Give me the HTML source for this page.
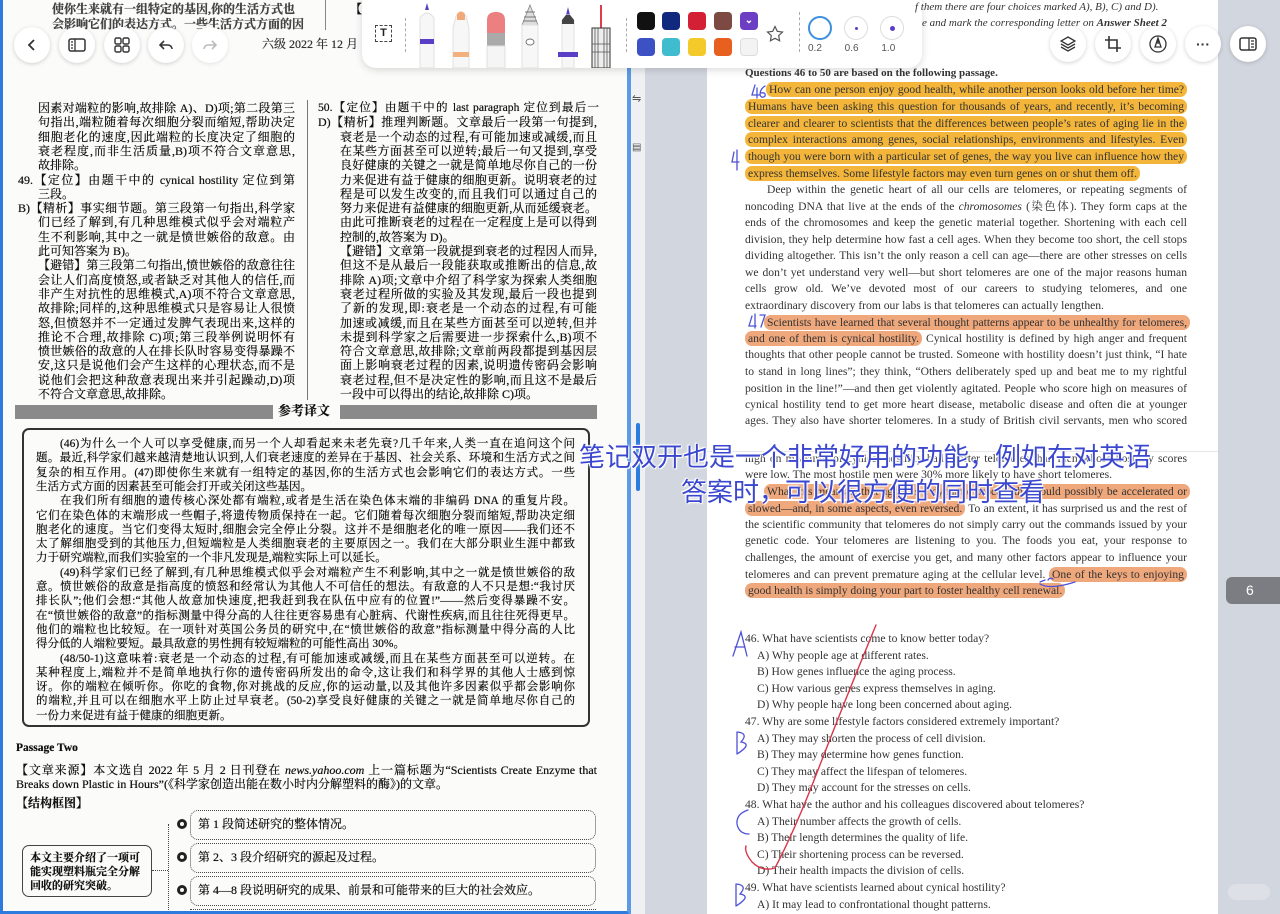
<!DOCTYPE html>
<html style="overflow:hidden;height:914px"><head><meta charset="utf-8">
<style>
*{margin:0;padding:0;box-sizing:border-box}
body{width:1280px;height:914px;overflow:hidden;background:#d2d6de;position:relative;font-family:"Liberation Serif","Noto Serif CJK SC",serif}
.abs{position:absolute}
#lp{position:absolute;left:0;top:0;width:629px;height:914px;background:#fbfbfa;border-left:3px solid #2e7be0;border-bottom:3px solid #2e7be0;border-right:2px solid #5b9ae6}
#mid{position:absolute;left:629px;top:0;width:16px;height:914px;background:#eef0f3}
#rp{position:absolute;left:707px;top:0;width:511px;height:914px;background:#fff}
.cn{position:absolute;font-size:12px;line-height:14.3px;height:14.3px;color:#111;text-shadow:0 0 .4px #111;text-align:justify;text-align-last:justify;overflow:hidden;font-family:"Liberation Serif","Noto Serif CJK SC",serif}
.nj{text-align-last:left}
.bx{font-size:11.5px}
.en{position:absolute;left:745px;width:442px;font-size:11.6px;line-height:16px;height:16px;color:#333;text-align:justify;text-align-last:justify;overflow:hidden;white-space:nowrap;word-spacing:0}
.en.nj{text-align-last:left}
.hy{background:#f4b63a;border-radius:7px;padding:1px 3px}
.ho{background:#efa77c;border-radius:7px;padding:1px 3px}
.q{position:absolute;font-size:11.6px;color:#333;white-space:nowrap}
.btn{position:absolute;width:36px;height:36px;border-radius:50%;background:#fff;box-shadow:0 1px 4px rgba(0,0,0,.18);display:flex;align-items:center;justify-content:center}
.ov{position:absolute;font-family:"Liberation Sans","Noto Sans CJK SC",sans-serif;font-size:26px;color:#3b47cf;white-space:nowrap;text-shadow:0 0 2px #fff,0 0 3px #fff,1px 1px 0 #fff,-1px -1px 0 #fff}
.sw{position:absolute;width:18px;height:18px;border-radius:4px}
</style></head><body>
<div id="lp"></div>
<div id="mid"></div>
<div class="abs" style="left:629px;top:0;width:2px;height:914px;background:#5b9ae6"></div>
<div id="rp"></div>

<div class="cn nj" style="left:52px;top:2px;width:260px;font-weight:bold;color:#444">使你生来就有一组特定的基因,你的生活方式也</div>
<div class="cn nj" style="left:52px;top:17px;width:260px;font-weight:bold;color:#444">会影响它们的表达方式。一些生活方式方面的因</div>
<div class="abs" style="left:325px;top:0;width:1px;height:30px;background:#888"></div>
<div class="cn nj" style="left:350px;top:2px;width:20px">【</div>

<div class="btn" style="left:14px;top:27px"><svg width="14" height="14" viewBox="0 0 14 14"><path d="M9 2L4 7l5 5" fill="none" stroke="#333" stroke-width="1.8"/></svg></div>
<div class="btn" style="left:59px;top:27px"><svg width="18" height="14" viewBox="0 0 18 14"><rect x="1" y="1" width="16" height="12" rx="2" fill="none" stroke="#333" stroke-width="1.5"/><path d="M7 1v12M3 4h2M3 7h2M3 10h2" stroke="#333" stroke-width="1.3"/></svg></div>
<div class="btn" style="left:104px;top:27px"><svg width="16" height="16" viewBox="0 0 16 16" fill="none" stroke="#333" stroke-width="1.4"><rect x="1" y="1" width="6" height="6" rx="1.5"/><rect x="9" y="1" width="6" height="6" rx="1.5"/><rect x="1" y="9" width="6" height="6" rx="1.5"/><rect x="9" y="9" width="6" height="6" rx="1.5"/></svg></div>
<div class="btn" style="left:148px;top:27px"><svg width="14" height="12" viewBox="0 0 14 12"><path d="M5 2L1 6l4 4M1 6h8a4 4 0 0 1 4 4" fill="none" stroke="#333" stroke-width="1.6"/></svg></div>
<div class="btn" style="left:192px;top:27px;box-shadow:0 1px 4px rgba(0,0,0,.1)"><svg width="14" height="12" viewBox="0 0 14 12"><path d="M9 2l4 4-4 4M13 6H5a4 4 0 0 0-4 4" fill="none" stroke="#bbb" stroke-width="1.6"/></svg></div>
<div class="cn nj" style="left:262px;top:37px;width:110px;color:#333">六级 2022 年 12 月</div>

<div class="abs" style="left:362px;top:-10px;width:560px;height:78px;background:#fff;border-radius:14px;box-shadow:0 2px 8px rgba(0,0,0,.15)"></div>
<div class="abs" style="left:375px;top:25px;width:17px;height:17px;border:1.5px dashed #444;font:bold 11px 'Liberation Sans',sans-serif;text-align:center;line-height:14px;color:#222">T</div>
<div class="abs" style="left:405px;top:18px;height:34px;border-left:1.5px dashed #aaa"></div>
<svg class="abs" style="left:410px;top:0" width="205" height="68" viewBox="0 0 205 68">
 <g><path d="M17 3l2 7h-4z" fill="#5a3fc0"/><path d="M10 18q7-10 14 0v50H10z" fill="#f7f7f7" stroke="#e0e0e0"/><rect x="10" y="39" width="14" height="5" fill="#5b3ec6"/></g>
 <g><path d="M46 16q5-6 10 0l3 12v40H43V28z" fill="#f7f7f7" stroke="#e0e0e0"/><path d="M47 14q4-5 8 0v6h-8z" fill="#f2a978"/><rect x="43" y="52" width="16" height="5" fill="#f3b07e"/></g>
 <g><path d="M77 20q0-8 9-8t9 8v13H77z" fill="#ec7f7f"/><rect x="77" y="33" width="18" height="13" fill="#aaa"/><rect x="77" y="46" width="18" height="22" fill="#f5f5f5" stroke="#e0e0e0"/></g>
 <g><path d="M120 5l8 20h-16z" fill="#ddd" stroke="#888" stroke-width=".8"/><path d="M115 12h10M114 17h12M113 21h14" stroke="#777"/><path d="M112 25h16v43h-16z" fill="#f7f7f7" stroke="#e0e0e0"/><ellipse cx="120" cy="42" rx="4" ry="3" fill="#fff" stroke="#777"/></g>
 <g><path d="M156 15l2-8h0l2 8z" fill="#5a3fc0"/><path d="M152 20l4-5h4l4 5v48h-12z" fill="#f7f7f7" stroke="#e0e0e0"/><path d="M152 20l4-5h4l4 5v4h-12z" fill="#444"/><rect x="148" y="52" width="20" height="5" fill="#5b3ec6"/></g>
 <g><rect x="190" y="5" width="2" height="25" fill="#e23b4a"/><rect x="182" y="28" width="18" height="40" fill="#eee" stroke="#333" stroke-width="1"/><path d="M185 28v40M188 28v40M194 28v40M197 28v40M182 44h18M182 52h18" stroke="#555" stroke-width=".8"/></g>
</svg>
<div class="abs" style="left:626px;top:18px;height:34px;border-left:1.5px dashed #aaa"></div>
<div class="sw" style="left:637px;top:12px;background:#111"></div>
<div class="sw" style="left:662px;top:12px;background:#10287e"></div>
<div class="sw" style="left:688px;top:12px;background:#d42034"></div>
<div class="sw" style="left:714px;top:12px;background:#7d4a43"></div>
<div class="sw" style="left:740px;top:12px;background:#6c3ec4;color:#fff;font:bold 10px sans-serif;text-align:center;line-height:18px">&#8964;</div>
<div class="sw" style="left:637px;top:38px;background:#3c52c4"></div>
<div class="sw" style="left:662px;top:38px;background:#3fbccd"></div>
<div class="sw" style="left:688px;top:38px;background:#f4ca2a"></div>
<div class="sw" style="left:714px;top:38px;background:#e8601f"></div>
<div class="sw" style="left:740px;top:38px;background:#f3f3f3;border:1px solid #ddd"></div>
<svg class="abs" style="left:766px;top:25px" width="18" height="18" viewBox="0 0 18 18"><path d="M9 1.5l2.3 4.8 5.2.7-3.8 3.6.9 5.2L9 13.3 4.4 15.8l.9-5.2L1.5 7l5.2-.7z" fill="none" stroke="#555" stroke-width="1.2"/></svg>
<div class="abs" style="left:799px;top:12px;height:40px;border-left:1.5px dashed #aaa"></div>
<div class="abs" style="left:808px;top:16px;width:24px;height:24px;border-radius:50%;border:2px solid #3a8fe0"></div>
<div class="abs" style="left:844px;top:16px;width:24px;height:24px;border-radius:50%;border:1px solid #ddd"><div class="abs" style="left:10px;top:10px;width:3px;height:3px;border-radius:50%;background:#5b3ec6"></div></div>
<div class="abs" style="left:880px;top:16px;width:24px;height:24px;border-radius:50%;border:1px solid #ddd"><div class="abs" style="left:9px;top:9px;width:5px;height:5px;border-radius:50%;background:#5b3ec6"></div></div>
<div class="abs" style="left:808px;top:43px;width:100px;font:10px 'Liberation Sans',sans-serif;color:#555;word-spacing:20px">0.2 0.6 1.0</div>

<div class="q" style="left:915px;top:1px;font-style:italic;font-size:11px">f them there are four choices marked A), B), C) and D).</div>
<div class="q" style="left:922px;top:17px;font-style:italic;font-size:11px">e and mark the corresponding letter on <b>Answer Sheet 2</b></div>
<div class="btn" style="left:1050px;top:26px"><svg width="16" height="16" viewBox="0 0 16 16" fill="none" stroke="#333" stroke-width="1.3"><path d="M8 1l7 4-7 4-7-4z"/><path d="M1 8l7 4 7-4M1 11l7 4 7-4"/></svg></div>
<div class="btn" style="left:1095px;top:26px"><svg width="16" height="16" viewBox="0 0 16 16" fill="none" stroke="#333" stroke-width="1.6"><path d="M4 0v12h12M0 4h12v12"/></svg></div>
<div class="btn" style="left:1140px;top:26px"><svg width="18" height="18" viewBox="0 0 18 18" fill="none" stroke="#333" stroke-width="1.3"><circle cx="9" cy="9" r="8"/><path d="M9 3l-3 9h6z M9 3v6"/></svg></div>
<div class="btn" style="left:1185px;top:26px;font:bold 14px sans-serif;color:#333">&middot;&middot;&middot;</div>
<div class="btn" style="left:1230px;top:26px"><svg width="18" height="14" viewBox="0 0 18 14"><rect x="1" y="1" width="16" height="12" rx="2" fill="none" stroke="#333" stroke-width="1.5"/><path d="M10 1v12M12 4h3M12 7h3M12 10h3" stroke="#333" stroke-width="1.3"/></svg></div>
<div class="abs" style="left:632px;top:92px;font:11px sans-serif;color:#555">&#8651;</div>
<div class="abs" style="left:632px;top:142px;font:10px sans-serif;color:#555">&#9636;</div>

<div class="abs" style="left:307px;top:100px;width:1px;height:300px;background:#777"></div>
<div class="cn" style="left:38px;top:101px;width:257px">因素对端粒的影响,故排除 A)、D)项;第二段第三</div>
<div class="cn" style="left:38px;top:115px;width:257px">句指出,端粒随着每次细胞分裂而缩短,帮助决定</div>
<div class="cn" style="left:38px;top:130px;width:257px">细胞老化的速度,因此端粒的长度决定了细胞的</div>
<div class="cn" style="left:38px;top:144px;width:257px">衰老程度,而非生活质量,B)项不符合文章意思,</div>
<div class="cn nj" style="left:38px;top:158px;width:257px">故排除。</div>
<div class="cn" style="left:18px;top:173px;width:277px">49.【定位】由题干中的 cynical hostility 定位到第</div>
<div class="cn nj" style="left:38px;top:187px;width:257px">三段。</div>
<div class="cn" style="left:18px;top:201px;width:277px">B)【精析】事实细节题。第三段第一句指出,科学家</div>
<div class="cn" style="left:38px;top:215px;width:257px">们已经了解到,有几种思维模式似乎会对端粒产</div>
<div class="cn" style="left:38px;top:230px;width:257px">生不利影响,其中之一就是愤世嫉俗的敌意。由</div>
<div class="cn nj" style="left:38px;top:244px;width:257px">此可知答案为 B)。</div>
<div class="cn" style="left:38px;top:258px;width:257px">【避错】第三段第二句指出,愤世嫉俗的敌意往往</div>
<div class="cn" style="left:38px;top:273px;width:257px">会让人们高度愤怒,或者缺乏对其他人的信任,而</div>
<div class="cn" style="left:38px;top:287px;width:257px">非产生对抗性的思维模式,A)项不符合文章意思,</div>
<div class="cn" style="left:38px;top:301px;width:257px">故排除;同样的,这种思维模式只是容易让人很愤</div>
<div class="cn" style="left:38px;top:316px;width:257px">怒,但愤怒并不一定通过发脾气表现出来,这样的</div>
<div class="cn" style="left:38px;top:330px;width:257px">推论不合理,故排除 C)项;第三段举例说明怀有</div>
<div class="cn" style="left:38px;top:344px;width:257px">愤世嫉俗的敌意的人在排长队时容易变得暴躁不</div>
<div class="cn" style="left:38px;top:358px;width:257px">安,这只是说他们会产生这样的心理状态,而不是</div>
<div class="cn" style="left:38px;top:373px;width:257px">说他们会把这种敌意表现出来并引起躁动,D)项</div>
<div class="cn nj" style="left:38px;top:387px;width:257px">不符合文章意思,故排除。</div>

<div class="cn" style="left:318px;top:101px;width:281px;font-size:11.6px">50.【定位】由题干中的 last paragraph 定位到最后一段。</div>
<div class="cn" style="left:318px;top:115px;width:279px">D)【精析】推理判断题。文章最后一段第一句提到,</div>
<div class="cn" style="left:340px;top:130px;width:257px">衰老是一个动态的过程,有可能加速或减缓,而且</div>
<div class="cn" style="left:340px;top:144px;width:257px">在某些方面甚至可以逆转;最后一句又提到,享受</div>
<div class="cn" style="left:340px;top:158px;width:257px">良好健康的关键之一就是简单地尽你自己的一份</div>
<div class="cn" style="left:340px;top:173px;width:257px">力来促进有益于健康的细胞更新。说明衰老的过</div>
<div class="cn" style="left:340px;top:187px;width:257px">程是可以发生改变的,而且我们可以通过自己的</div>
<div class="cn" style="left:340px;top:201px;width:257px">努力来促进有益健康的细胞更新,从而延缓衰老。</div>
<div class="cn" style="left:340px;top:215px;width:257px">由此可推断衰老的过程在一定程度上是可以得到</div>
<div class="cn nj" style="left:340px;top:230px;width:257px">控制的,故答案为 D)。</div>
<div class="cn" style="left:340px;top:244px;width:257px">【避错】文章第一段就提到衰老的过程因人而异,</div>
<div class="cn" style="left:340px;top:258px;width:257px">但这不是从最后一段能获取或推断出的信息,故</div>
<div class="cn" style="left:340px;top:273px;width:257px">排除 A)项;文章中介绍了科学家为探索人类细胞</div>
<div class="cn" style="left:340px;top:287px;width:257px">衰老过程所做的实验及其发现,最后一段也提到</div>
<div class="cn" style="left:340px;top:301px;width:257px">了新的发现,即:衰老是一个动态的过程,有可能</div>
<div class="cn" style="left:340px;top:316px;width:257px">加速或减缓,而且在某些方面甚至可以逆转,但并</div>
<div class="cn" style="left:340px;top:330px;width:257px">未提到科学家之后需要进一步探索什么,B)项不</div>
<div class="cn" style="left:340px;top:344px;width:257px">符合文章意思,故排除;文章前两段都提到基因层</div>
<div class="cn" style="left:340px;top:358px;width:257px">面上影响衰老过程的因素,说明遗传密码会影响</div>
<div class="cn" style="left:340px;top:373px;width:257px">衰老过程,但不是决定性的影响,而且这不是最后</div>
<div class="cn nj" style="left:340px;top:387px;width:257px">一段中可以得出的结论,故排除 C)项。</div>

<div class="abs" style="left:15px;top:405px;width:258px;height:14px;background:#8a8a8a"></div>
<div class="abs" style="left:340px;top:405px;width:257px;height:14px;background:#8a8a8a"></div>
<div class="cn nj" style="left:278px;top:404px;width:60px;font-weight:bold;font-size:13px;height:16px">参考译文</div>

<div class="abs" style="left:22px;top:428px;width:568px;height:299px;border:2px solid #333;border-radius:7px"></div>
<div class="cn bx" style="left:60px;top:437px;width:515px">(46)为什么一个人可以享受健康,而另一个人却看起来未老先衰?几千年来,人类一直在追问这个问</div>
<div class="cn bx" style="left:36px;top:451px;width:539px">题。最近,科学家们越来越清楚地认识到,人们衰老速度的差异在于基因、社会关系、环境和生活方式之间</div>
<div class="cn bx" style="left:36px;top:466px;width:539px">复杂的相互作用。(47)即使你生来就有一组特定的基因,你的生活方式也会影响它们的表达方式。一些</div>
<div class="cn bx nj" style="left:36px;top:480px;width:539px">生活方式方面的因素甚至可能会打开或关闭这些基因。</div>
<div class="cn bx" style="left:60px;top:494px;width:515px">在我们所有细胞的遗传核心深处都有端粒,或者是生活在染色体末端的非编码 DNA 的重复片段。</div>
<div class="cn bx" style="left:36px;top:509px;width:539px">它们在染色体的末端形成一些帽子,将遗传物质保持在一起。它们随着每次细胞分裂而缩短,帮助决定细</div>
<div class="cn bx" style="left:36px;top:523px;width:539px">胞老化的速度。当它们变得太短时,细胞会完全停止分裂。这并不是细胞老化的唯一原因——我们还不</div>
<div class="cn bx" style="left:36px;top:537px;width:539px">太了解细胞受到的其他压力,但短端粒是人类细胞衰老的主要原因之一。我们在大部分职业生涯中都致</div>
<div class="cn bx nj" style="left:36px;top:551px;width:539px">力于研究端粒,而我们实验室的一个非凡发现是,端粒实际上可以延长。</div>
<div class="cn bx" style="left:60px;top:566px;width:515px">(49)科学家们已经了解到,有几种思维模式似乎会对端粒产生不利影响,其中之一就是愤世嫉俗的敌</div>
<div class="cn bx" style="left:36px;top:580px;width:539px">意。愤世嫉俗的敌意是指高度的愤怒和经常认为其他人不可信任的想法。有敌意的人不只是想:“我讨厌</div>
<div class="cn bx" style="left:36px;top:594px;width:539px">排长队”;他们会想:“其他人故意加快速度,把我赶到我在队伍中应有的位置!”——然后变得暴躁不安。</div>
<div class="cn bx" style="left:36px;top:609px;width:539px">在“愤世嫉俗的敌意”的指标测量中得分高的人往往更容易患有心脏病、代谢性疾病,而且往往死得更早。</div>
<div class="cn bx" style="left:36px;top:623px;width:539px">他们的端粒也比较短。在一项针对英国公务员的研究中,在“愤世嫉俗的敌意”指标测量中得分高的人比</div>
<div class="cn bx nj" style="left:36px;top:637px;width:539px">得分低的人端粒要短。最具敌意的男性拥有较短端粒的可能性高出 30%。</div>
<div class="cn bx" style="left:60px;top:652px;width:515px">(48/50-1)这意味着:衰老是一个动态的过程,有可能加速或减缓,而且在某些方面甚至可以逆转。在</div>
<div class="cn bx" style="left:36px;top:666px;width:539px">某种程度上,端粒并不是简单地执行你的遗传密码所发出的命令,这让我们和科学界的其他人士感到惊</div>
<div class="cn bx" style="left:36px;top:680px;width:539px">讶。你的端粒在倾听你。你吃的食物,你对挑战的反应,你的运动量,以及其他许多因素似乎都会影响你</div>
<div class="cn bx" style="left:36px;top:694px;width:539px">的端粒,并且可以在细胞水平上防止过早衰老。(50-2)享受良好健康的关键之一就是简单地尽你自己的</div>
<div class="cn bx nj" style="left:36px;top:709px;width:539px">一份力来促进有益于健康的细胞更新。</div>

<div class="cn nj" style="left:16px;top:741px;width:200px;font-weight:bold;font-size:11.5px">Passage Two</div>
<div class="cn" style="left:16px;top:763px;width:581px">【文章来源】本文选自 2022 年 5 月 2 日刊登在 <i>news.yahoo.com</i> 上一篇标题为“Scientists Create Enzyme that</div>
<div class="cn nj" style="left:16px;top:777px;width:581px">Breaks down Plastic in Hours”(《科学家创造出能在数小时内分解塑料的酶》)的文章。</div>
<div class="cn nj" style="left:16px;top:796px;width:200px;font-weight:bold">【结构框图】</div>
<div class="abs" style="left:22px;top:845px;width:130px;height:52px;border:1.5px solid #444;border-radius:7px"></div>
<div class="cn nj" style="left:30px;top:851px;width:120px;font-weight:bold;font-size:11px;line-height:14px;height:44px">本文主要介绍了一项可<br>能实现塑料瓶完全分解<br>回收的研究突破。</div>
<div class="abs" style="left:152px;top:870px;width:16px;border-top:1.5px dotted #444"></div>
<div class="abs" style="left:168px;top:824px;height:86px;border-left:1.5px dotted #444"></div>
<div class="abs" style="left:190px;top:810px;width:406px;height:30px;border:1.5px dotted #444;border-radius:8px"></div>
<div class="abs" style="left:190px;top:843px;width:406px;height:30px;border:1.5px dotted #444;border-radius:8px"></div>
<div class="abs" style="left:190px;top:876px;width:406px;height:30px;border:1.5px dotted #444;border-radius:8px"></div>
<div class="abs" style="left:190px;top:909px;width:406px;height:2px;border-top:1.5px dotted #444"></div>
<div class="abs" style="left:177px;top:819px;width:10px;height:10px;border-radius:50%;border:3px solid #222"></div>
<div class="abs" style="left:177px;top:852px;width:10px;height:10px;border-radius:50%;border:3px solid #222"></div>
<div class="abs" style="left:177px;top:885px;width:10px;height:10px;border-radius:50%;border:3px solid #222"></div>
<div class="cn nj" style="left:198px;top:817px;width:300px">第 1 段简述研究的整体情况。</div>
<div class="cn nj" style="left:198px;top:850px;width:300px">第 2、3 段介绍研究的源起及过程。</div>
<div class="cn nj" style="left:198px;top:883px;width:380px">第 4—8 段说明研究的成果、前景和可能带来的巨大的社会效应。</div>

<div class="en nj" style="top:65px;font-weight:bold;font-size:11px">Questions 46 to 50 are based on the following passage.</div>
<div class="en" style="top:82px;left:766px;width:421px"><span class="hy">How can one person enjoy good health, while another person looks old before her time?</span></div>
<div class="en" style="top:99px"><span class="hy">Humans have been asking this question for thousands of years, and recently, it’s becoming</span></div>
<div class="en" style="top:116px"><span class="hy">clearer and clearer to scientists that the differences between people’s rates of aging lie in the</span></div>
<div class="en" style="top:132px"><span class="hy">complex interactions among genes, social relationships, environments and lifestyles. Even</span></div>
<div class="en" style="top:149px"><span class="hy">though you were born with a particular set of genes, the way you live can influence how they</span></div>
<div class="en nj" style="top:166px"><span class="hy">express themselves. Some lifestyle factors may even turn genes on or shut them off.</span></div>
<div class="en" style="top:182px;left:767px;width:420px">Deep within the genetic heart of all our cells are telomeres, or repeating segments of</div>
<div class="en" style="top:199px">noncoding DNA that live at the ends of the <i>chromosomes</i> (染色体). They form caps at the</div>
<div class="en" style="top:215px">ends of the chromosomes and keep the genetic material together. Shortening with each cell</div>
<div class="en" style="top:232px">division, they help determine how fast a cell ages. When they become too short, the cell stops</div>
<div class="en" style="top:248px">dividing altogether. This isn’t the only reason a cell can age—there are other stresses on cells</div>
<div class="en" style="top:265px">we don’t yet understand very well—but short telomeres are one of the major reasons human</div>
<div class="en" style="top:281px">cells grow old. We’ve devoted most of our careers to studying telomeres, and one</div>
<div class="en nj" style="top:298px">extraordinary discovery from our labs is that telomeres can actually lengthen.</div>
<div class="en" style="top:315px;left:764px;width:426px"><span class="ho">Scientists have learned that several thought patterns appear to be unhealthy for telomeres,</span></div>
<div class="en" style="top:331px"><span class="ho">and one of them is cynical hostility.</span> Cynical hostility is defined by high anger and frequent</div>
<div class="en" style="top:347px">thoughts that other people cannot be trusted. Someone with hostility doesn’t just think, “I hate</div>
<div class="en" style="top:364px">to stand in long lines”; they think, “Others deliberately sped up and beat me to my rightful</div>
<div class="en" style="top:381px">position in the line!”—and then get violently agitated. People who score high on measures of</div>
<div class="en" style="top:397px">cynical hostility tend to get more heart disease, metabolic disease and often die at younger</div>
<div class="en" style="top:413px">ages. They also have shorter telomeres. In a study of British civil servants, men who scored</div>
<div class="abs" style="left:707px;top:451px;width:511px;height:1px;background:#e6e6e6"></div>
<div class="en" style="top:451px">high on measures of cynical hostility had shorter telomeres than men whose hostility scores</div>
<div class="en nj" style="top:467px">were low. The most hostile men were 30% more likely to have short telomeres.</div>
<div class="en" style="top:484px;left:764px;width:426px"><span class="ho">What this means is that aging is a dynamic process that could possibly be accelerated or</span></div>
<div class="en" style="top:501px"><span class="ho">slowed—and, in some aspects, even reversed.</span> To an extent, it has surprised us and the rest of</div>
<div class="en" style="top:517px">the scientific community that telomeres do not simply carry out the commands issued by your</div>
<div class="en" style="top:533px">genetic code. Your telomeres are listening to you. The foods you eat, your response to</div>
<div class="en" style="top:550px">challenges, the amount of exercise you get, and many other factors appear to influence your</div>
<div class="en" style="top:567px">telomeres and can prevent premature aging at the cellular level. <span class="ho">One of the keys to enjoying</span></div>
<div class="en nj" style="top:583px"><span class="ho">good health is simply doing your part to foster healthy cell renewal.</span></div>

<div class="q" style="left:745px;top:632px">46. What have scientists come to know better today?</div>
<div class="q" style="left:757px;top:649px">A) Why people age at different rates.</div>
<div class="q" style="left:757px;top:665px">B) How genes influence the aging process.</div>
<div class="q" style="left:757px;top:682px">C) How various genes express themselves in aging.</div>
<div class="q" style="left:757px;top:698px">D) Why people have long been concerned about aging.</div>
<div class="q" style="left:745px;top:715px">47. Why are some lifestyle factors considered extremely important?</div>
<div class="q" style="left:757px;top:732px">A) They may shorten the process of cell division.</div>
<div class="q" style="left:757px;top:748px">B) They may determine how genes function.</div>
<div class="q" style="left:757px;top:765px">C) They may affect the lifespan of telomeres.</div>
<div class="q" style="left:757px;top:781px">D) They may account for the stresses on cells.</div>
<div class="q" style="left:745px;top:798px">48. What have the author and his colleagues discovered about telomeres?</div>
<div class="q" style="left:757px;top:815px">A) Their number affects the growth of cells.</div>
<div class="q" style="left:757px;top:831px">B) Their length determines the quality of life.</div>
<div class="q" style="left:757px;top:848px">C) Their shortening process can be reversed.</div>
<div class="q" style="left:757px;top:864px">D) Their health impacts the division of cells.</div>
<div class="q" style="left:745px;top:881px">49. What have scientists learned about cynical hostility?</div>
<div class="q" style="left:757px;top:898px">A) It may lead to confrontational thought patterns.</div>

<svg class="abs" style="left:700px;top:0" width="520" height="914" viewBox="700 0 520 914" fill="none" stroke-linecap="round">
 <path d="M876 625Q845 700 818 770Q795 830 775 868Q762 872 752 862Q744 852 746 846" stroke="#d8364a" stroke-width="1.4"/>
 <g stroke="#4d52d6" stroke-width="1.3">
  <path d="M733 656L741 632L747 656M735 647h10"/>
  <path d="M737 732v22M737 732q12 1 4 10q12 2 -4 12"/>
  <path d="M748 810q-12 4 -11 14q2 10 12 10"/>
  <path d="M736 884v22M736 884q12 1 4 10q12 2 -4 12"/>
  <path d="M755 85l-3 10h7M757 88v10M765 86q-5 3 -5 9q2 4 5 1q1-4 -4-3"/>
  <path d="M734 152l-2 10h7M737 150v20"/>
  <path d="M752 316l-3 10h7M755 314v14M760 315h5l-4 12"/>
  <path d="M1040 582l5-2M1048 580q2-3 5-1M1040 584q10 6 35 -2"/>
 </g>
</svg>

<div class="abs" style="left:636px;top:423px;width:4px;height:68px;background:#2e7be0;border-radius:2px"></div>
<div class="ov" style="left:579px;top:437px">笔记双开也是一个非常好用的功能，例如在对英语</div>
<div class="ov" style="left:681px;top:472px">答案时，可以很方便的同时查看</div>

<div class="abs" style="left:1226px;top:577px;width:54px;height:27px;background:#7b7d82;border-radius:6px 0 0 6px;color:#fff;font:14px 'Liberation Sans',sans-serif;line-height:27px;padding-left:20px">6</div>
<div class="abs" style="left:1228px;top:884px;width:42px;height:16px;border-radius:8px;background:#dde0e6"></div>
</body></html>
